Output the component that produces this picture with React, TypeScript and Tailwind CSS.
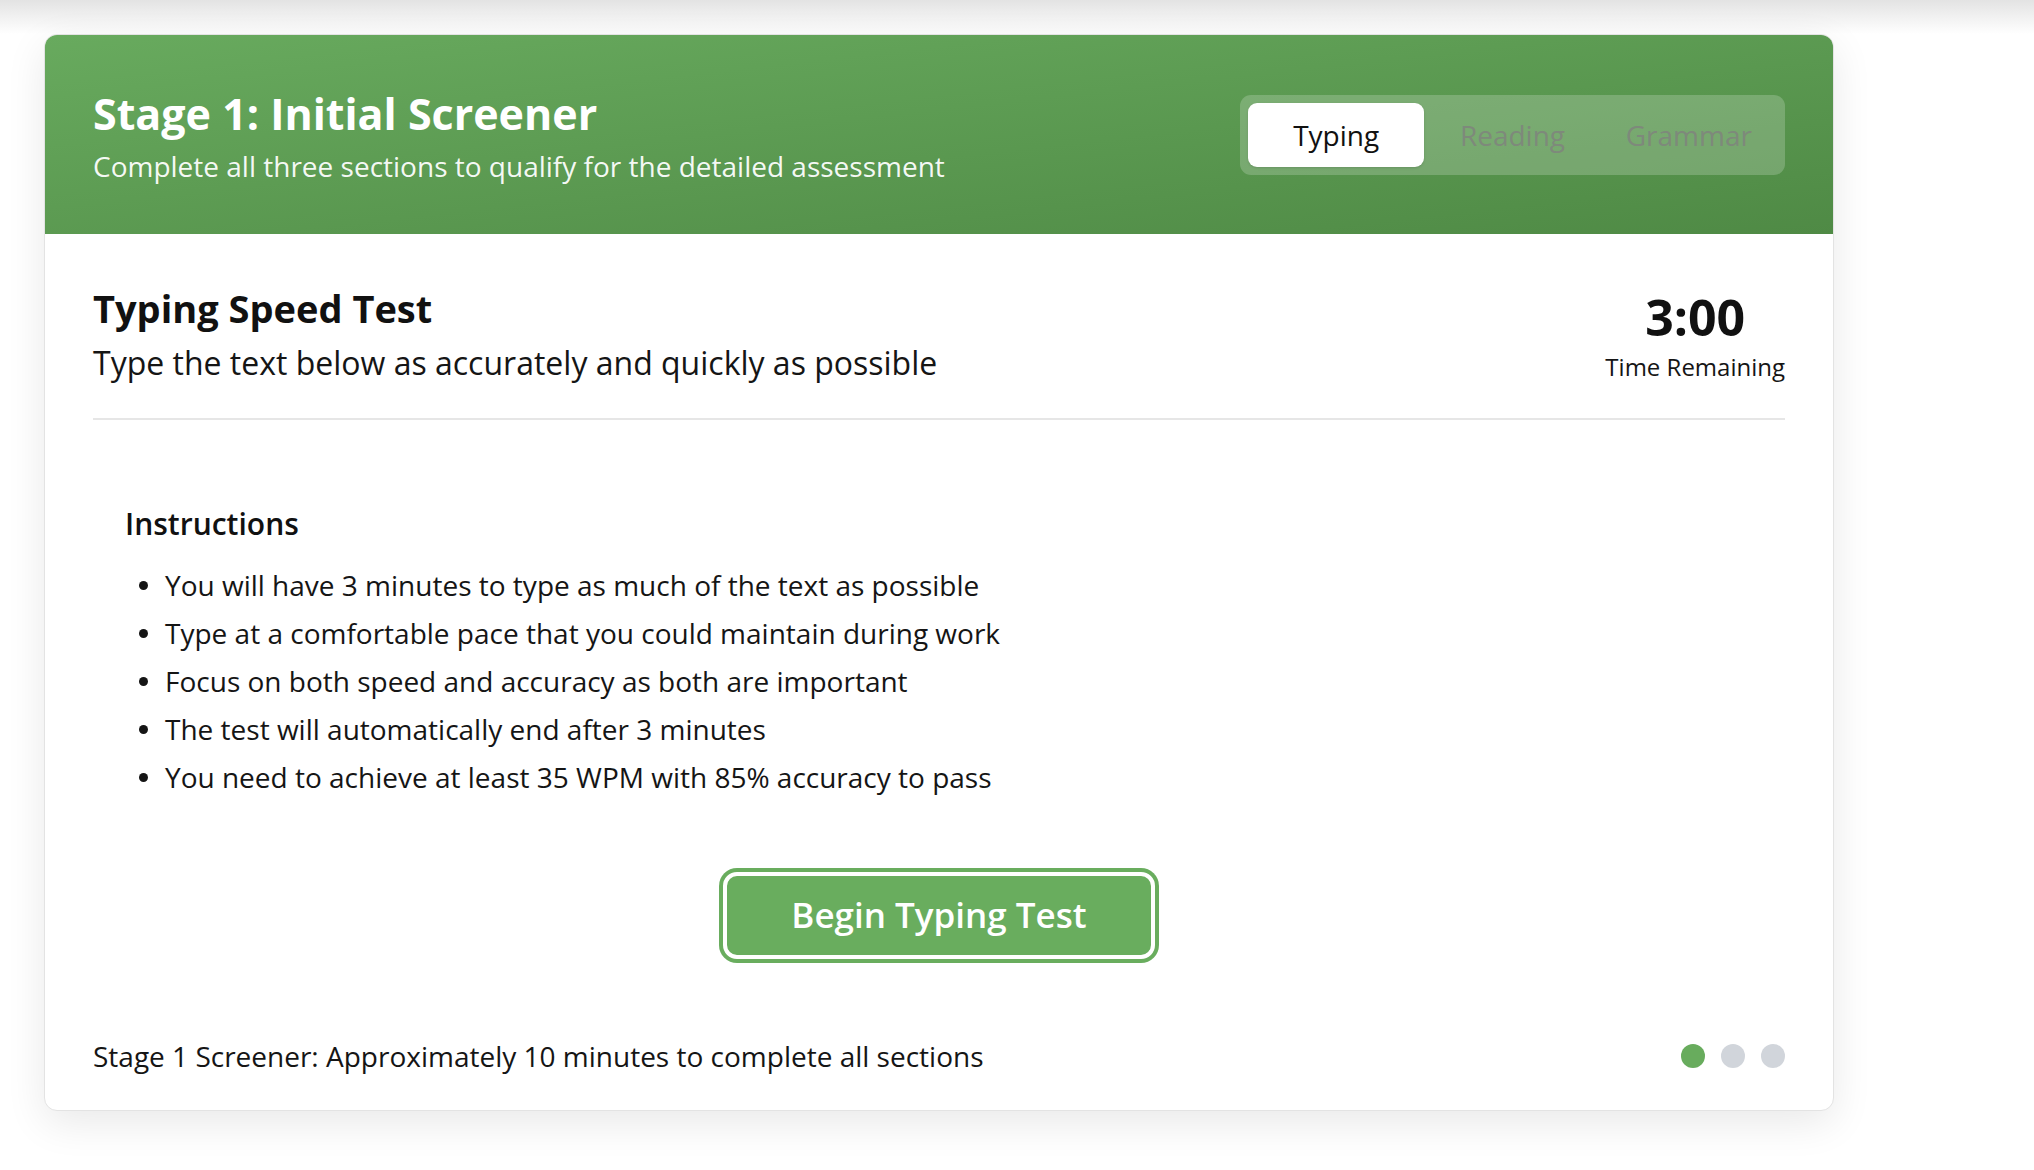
import React from 'react'

const instructions = [
  'You will have 3 minutes to type as much of the text as possible',
  'Type at a comfortable pace that you could maintain during work',
  'Focus on both speed and accuracy as both are important',
  'The test will automatically end after 3 minutes',
  'You need to achieve at least 35 WPM with 85% accuracy to pass',
]

const tabs = ['Typing', 'Reading', 'Grammar']

export default function App() {
  const active = 0

  return (
    <div className="min-h-screen bg-white text-[#151515]" style={{ fontFamily: '"Open Sans", "Noto Sans", sans-serif' }}>
      <div className="h-[34px] bg-gradient-to-b from-[#e3e3e3] to-white" />

      <div className="ml-[44px] w-[1790px] rounded-[13px] border border-[#e3e3e3] bg-white shadow-[0_12px_40px_rgba(0,0,0,0.09)] overflow-hidden">
        {/* Header */}
        <div className="h-[199px] px-[48px] flex items-center justify-between bg-gradient-to-br from-[#68aa5e] to-[#4f8a45]">
          <div>
            <h1 className="text-[43px] leading-[55px] font-bold text-white">Stage 1: Initial Screener</h1>
            <p className="mt-[7px] text-[28px] leading-[36px] text-white/95">
              Complete all three sections to qualify for the detailed assessment
            </p>
          </div>

          <div className="grid grid-cols-3 w-[545px] p-[8px] rounded-[11px] bg-white/20">
            {tabs.map((tab, i) => (
              <div
                key={tab}
                className={
                  i === active
                    ? 'h-[64px] flex items-center justify-center rounded-[9px] bg-white text-[28px] text-[#111] shadow-sm'
                    : 'h-[64px] flex items-center justify-center text-[28px] text-[#7e897b]'
                }
              >
                {tab}
              </div>
            ))}
          </div>
        </div>

        {/* Body */}
        <div className="px-[48px]">
          <div className="flex items-start justify-between pt-[51px] pb-[34px] border-b-2 border-[#e6e6e6]">
            <div>
              <h2 className="text-[38px] leading-[46px] font-bold text-[#111]">Typing Speed Test</h2>
              <p className="mt-[11px] text-[32px] leading-[42px] text-[#151515]">
                Type the text below as accurately and quickly as possible
              </p>
            </div>
            <div className="mt-[4px] flex flex-col items-center">
              <div className="text-[50px] leading-[56px] font-bold text-[#111]">3:00</div>
              <div className="mt-[7px] text-[24px] leading-[30px] text-[#151515]">Time Remaining</div>
            </div>
          </div>

          <div className="mt-[48px] px-[32px] pt-[36px]">
            <h3 className="text-[30px] leading-[40px] font-semibold text-[#111]">Instructions</h3>
            <ul className="mt-[17px]">
              {instructions.map((item) => (
                <li key={item} className="flex items-center h-[48px] text-[28px]">
                  <span className="ml-[14px] mr-[17px] w-[9px] h-[9px] rounded-full bg-[#151515]" />
                  {item}
                </li>
              ))}
            </ul>
          </div>

          <div className="mt-[71px] flex justify-center">
            <button
              type="button"
              className="w-[432px] h-[87px] rounded-[14px] border-[4px] border-white bg-[#69ad5e] text-white text-[35px] font-semibold shadow-[0_0_0_4px_#69ad5e]"
            >
              Begin Typing Test
            </button>
          </div>

          <div className="flex items-center justify-between pt-[78px] pb-[35px]">
            <p className="text-[28px] leading-[38px] text-[#151515]">
              Stage 1 Screener: Approximately 10 minutes to complete all sections
            </p>
            <div className="flex gap-[16px]">
              <span className="w-[24px] h-[24px] rounded-full bg-[#68ac5d]" />
              <span className="w-[24px] h-[24px] rounded-full bg-[#d1d5db]" />
              <span className="w-[24px] h-[24px] rounded-full bg-[#d1d5db]" />
            </div>
          </div>
        </div>
      </div>
    </div>
  )
}
